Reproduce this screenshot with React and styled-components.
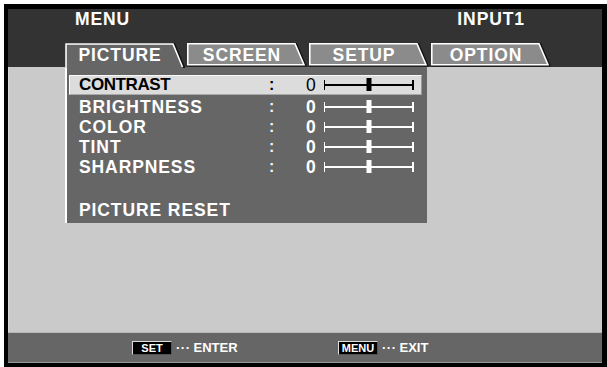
import React from 'react'
import styled, { createGlobalStyle } from 'styled-components'

const GlobalStyle = createGlobalStyle`
  body {
    margin: 0;
    background: #fff;
    font-family: "Liberation Sans", Arial, sans-serif;
  }
`

const tabs = ['PICTURE', 'SCREEN', 'SETUP', 'OPTION']

const items = [
  { label: 'CONTRAST', value: 0 },
  { label: 'BRIGHTNESS', value: 0 },
  { label: 'COLOR', value: 0 },
  { label: 'TINT', value: 0 },
  { label: 'SHARPNESS', value: 0 },
]

// tab outline, active one opens into the panel below
const TabShape = ({ active }) =>
  active ? (
    <TabSvg viewBox="0 0 120 25" preserveAspectRatio="none">
      <polygon points="0,25 0,0 110,0 120,24 120,25" fill="#111" />
      <polygon points="1,25 1,1 108,1 118,25" fill="#666" />
      <polyline points="1,25 1,1 108,1 117.5,24" fill="none" stroke="#fff" strokeWidth="1.6" />
    </TabSvg>
  ) : (
    <TabSvg viewBox="0 0 120 25" preserveAspectRatio="none">
      <polygon points="0,24.5 0,0 110,0 120,24.5" fill="#111" />
      <polygon points="0.8,22.6 0.8,0.8 108,0.8 117,22.6" fill="#8b8b8b" stroke="#fff" strokeWidth="1.6" />
    </TabSvg>
  )

const App = () => {
  return (
    <>
      <GlobalStyle />
      <Screen>
        <Header>
          <TitleRow>
            <Title>MENU</Title>
            <Title $right>INPUT1</Title>
          </TitleRow>
          <Tabs>
            {tabs.map((t, i) => (
              <Tab key={t} $active={i === 0}>
                <TabShape active={i === 0} />
                <TabLabel>{t}</TabLabel>
              </Tab>
            ))}
          </Tabs>
        </Header>
        <Body>
          <Panel>
            {items.map((it, i) => (
              <Row key={it.label} $selected={i === 0}>
                <Label $selected={i === 0}>{it.label}</Label>
                <Colon $selected={i === 0}>:</Colon>
                <Value $selected={i === 0}>{it.value}</Value>
                <Slider $selected={i === 0}>
                  <Knob $selected={i === 0} style={{ left: `${((it.value + 30) / 60) * 100}%` }} />
                </Slider>
              </Row>
            ))}
            <Row $reset>
              <Label>PICTURE RESET</Label>
            </Row>
          </Panel>
        </Body>
        <Footer>
          <Hint>
            <Key>SET</Key>
            <Dots>···</Dots>
            <HintText>ENTER</HintText>
          </Hint>
          <Hint>
            <Key>MENU</Key>
            <Dots>···</Dots>
            <HintText>EXIT</HintText>
          </Hint>
        </Footer>
      </Screen>
    </>
  )
}

const Screen = styled.div`
  margin: 4px 0 0 4px;
  width: 603px;
  height: 363px;
  box-sizing: border-box;
  border: 4px solid #000;
  border-top-width: 5px;
  border-right-width: 5px;
  display: flex;
  flex-direction: column;
  overflow: hidden;
`

const Header = styled.div`
  background: #333;
  height: 58px;
  display: flex;
  flex-direction: column;
`

const TitleRow = styled.div`
  display: flex;
  padding-left: 67px;
  line-height: 20px;
`

const Title = styled.div`
  color: #fff;
  font-size: 17.5px;
  font-weight: bold;
  letter-spacing: 0.9px;
  margin-left: ${p => (p.$right ? 'auto' : '0')};
  margin-right: ${p => (p.$right ? '77px' : '0')};
`

const Tabs = styled.div`
  display: flex;
  gap: 2px;
  padding-left: 57px;
  margin-top: 14px;
`

const Tab = styled.div`
  position: relative;
  width: 120px;
  height: ${p => (p.$active ? '25px' : '24px')};
  display: flex;
  align-items: center;
  justify-content: center;
  padding-right: 10px;
  box-sizing: border-box;
`

const TabSvg = styled.svg`
  position: absolute;
  inset: 0;
  width: 100%;
  height: 100%;
`

const TabLabel = styled.span`
  position: relative;
  color: #fff;
  font-size: 17.5px;
  font-weight: bold;
  letter-spacing: 0.9px;
  line-height: 20px;
  margin-top: -1px;
`

const Body = styled.div`
  flex: 1;
  background: #cacaca;
  padding-left: 57px;
  box-shadow: inset 1px 0 0 #d8d8d8;
`

const Panel = styled.div`
  width: 362px;
  height: 156px;
  box-sizing: border-box;
  background: #666;
  border-left: 2px solid #fff;
  padding: 8px 5px 0 2px;
  display: flex;
  flex-direction: column;
`

const Row = styled.div`
  display: flex;
  align-items: center;
  height: 20px;
  box-sizing: border-box;
  padding-left: ${p => (p.$selected ? '9px' : '10px')};
  margin-bottom: ${p => (p.$selected ? '2px' : '0')};
  margin-top: ${p => (p.$reset ? '23px' : '0')};
  background: ${p => (p.$selected ? '#dcdcdc' : 'transparent')};
  border: ${p => (p.$selected ? '1px solid #fafafa' : 'none')};
  border-right-color: #9a9a9a;
  border-bottom-color: #a8a8a8;
`

const Label = styled.span`
  width: 190px;
  flex: none;
  font-size: ${p => (p.$selected ? '17px' : '17.5px')};
  font-weight: bold;
  line-height: 20px;
  letter-spacing: ${p => (p.$selected ? '-0.4px' : '0.9px')};
  color: ${p => (p.$selected ? '#000' : '#fff')};
  white-space: nowrap;
`

const Colon = styled.span`
  width: 37px;
  flex: none;
  font-size: 16px;
  font-weight: bold;
  color: ${p => (p.$selected ? '#000' : '#f2f2f2')};
`

const Value = styled.span`
  width: 18px;
  flex: none;
  font-size: 17.5px;
  font-weight: ${p => (p.$selected ? 'normal' : 'bold')};
  color: ${p => (p.$selected ? '#000' : '#fff')};
`

const Slider = styled.div`
  position: relative;
  width: 90px;
  height: 10px;
  box-sizing: border-box;
  border-left: 1.5px solid ${p => (p.$selected ? '#000' : '#fff')};
  border-right: 2px solid ${p => (p.$selected ? '#000' : '#fff')};
  &::before {
    content: '';
    position: absolute;
    left: 0;
    right: 0;
    top: 4px;
    height: 2px;
    background: ${p => (p.$selected ? '#000' : '#fff')};
  }
`

const Knob = styled.span`
  position: absolute;
  top: -2px;
  width: 5px;
  height: 13px;
  transform: translateX(-50%);
  background: ${p => (p.$selected ? '#000' : '#fff')};
`

const Footer = styled.div`
  height: 31px;
  box-sizing: border-box;
  background: #666;
  border-top: 1px solid #b8b8b8;
  border-bottom: 1px solid #9a9a9a;
  display: flex;
  align-items: center;
  gap: 98px;
  padding-left: 124px;
`

const Hint = styled.div`
  display: flex;
  align-items: center;
  width: 108px;
`

const Key = styled.span`
  width: 40px;
  height: 14px;
  box-sizing: border-box;
  display: flex;
  align-items: center;
  justify-content: center;
  background: #000;
  color: #fff;
  font-size: 11px;
  font-weight: bold;
  border: 1px solid #ddd;
  border-right-color: #555;
  border-bottom-color: #555;
`

const Dots = styled.span`
  color: #fff;
  font-size: 13px;
  font-weight: bold;
  letter-spacing: 0.5px;
  margin: 0 3px 0 4px;
`

const HintText = styled.span`
  color: #fff;
  font-size: 13px;
  font-weight: bold;
`

export default App
